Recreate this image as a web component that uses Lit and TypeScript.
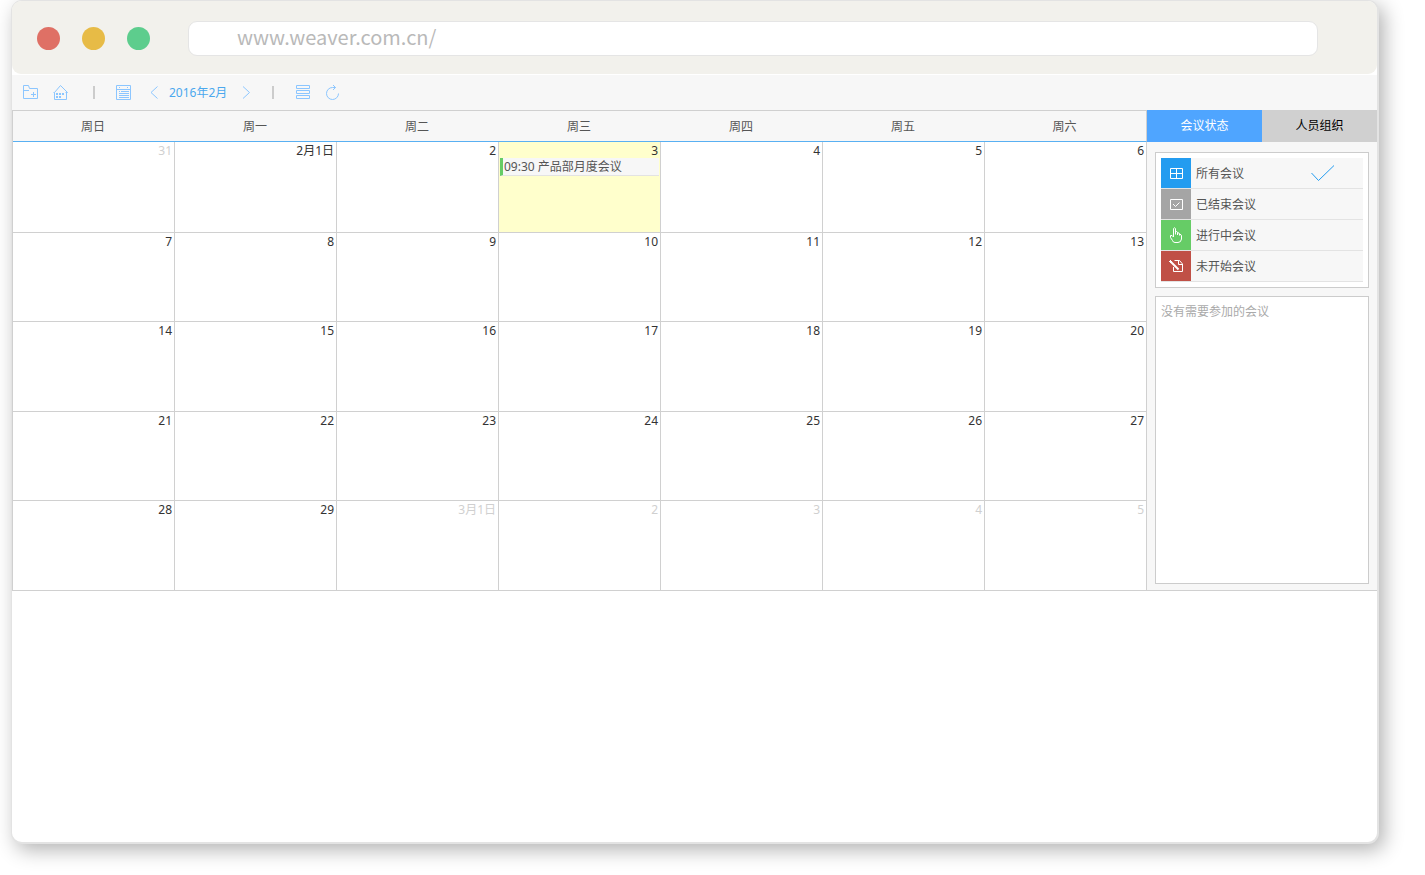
import { LitElement, html, css, svg } from "lit";
import { customElement, state } from "lit/decorators.js";
import { classMap } from "lit/directives/class-map.js";

interface Day {
  label: string;
  other?: boolean;
  today?: boolean;
  event?: string;
}

const WEEKDAYS = ["周日", "周一", "周二", "周三", "周四", "周五", "周六"];

const DAYS: Day[] = [
  { label: "31", other: true },
  { label: "2月1日" },
  { label: "2" },
  { label: "3", today: true, event: "09:30 产品部月度会议" },
  ...Array.from({ length: 26 }, (_, i) => ({ label: String(i + 4) })),
  { label: "3月1日", other: true },
  ...["2", "3", "4", "5"].map((label) => ({ label, other: true })),
];

const WEEKS = Array.from({ length: 5 }, (_, i) => DAYS.slice(i * 7, i * 7 + 7));

const icon = (w: number, h: number, body: unknown) =>
  html`<svg width=${w} height=${h} viewBox="0 0 ${w} ${h}" fill="none" stroke="currentColor" aria-hidden="true">${body}</svg>`;

const ICONS = {
  folder: icon(16, 15, svg`<path d="M.5 13.5V.5H5.5L6.5 3.5H14.5V13.5ZM.5 5.5H6M8 9.5H13M10.5 7V12" />`),
  home: icon(16, 15, svg`<path d="M1.5 7.5L7.5 .5L14.5 7.5H12.5M.5 7.500H1.500V14.500H13.500V7.500" /><path d="M3 9H5M6 9H8M9 9H11M3 12H5M6 12H8" stroke-width="2" />`),
  month: icon(16, 15, svg`<path d="M.5 .5H14.5V14.5H.5ZM.5 4.5H14.5M3 6.5H4M5 6.5H13M3 8.5H13M3 10.5H13M3 12.5H13M3.5 2V3M11.5 2V3" />`),
  prev: icon(8, 13, svg`<path d="M7.5 .5L1 6.5L7.5 12.5" />`),
  next: icon(8, 13, svg`<path d="M1 .5L7.5 6.5L1 12.5" />`),
  list: icon(16, 15, svg`<path d="M1.5 .5H14.5V3.5H1.5ZM1.5 5.5H14.5V8.5H1.5ZM1.5 10.5H14.5V13.5H1.5Z" />`),
  refresh: icon(16, 15, svg`<path d="M10.5 2.5H7.5A6 6 0 1 0 13.500 8.500M8 0L10.5 2.5L8 5" />`),
  all: icon(14, 12, svg`<path d="M1.500 1.500H13.500V11.500H1.500ZM7.500 1.500V11.500M1.500 6.500H13.500" />`),
  ended: icon(14, 12, svg`<path d="M1.500 1.500H13.500V11.500H1.500Z" /><path d="M4 6L6.500 8.500L10.500 4.500" />`),
  hand: icon(12, 16, svg`<path d="M3.500 10V1.500Q4.500 0 5.500 1.500V7.500M5.500 4.500Q7 4 7.500 5.500V8M7.500 5.500Q9 5.500 9.500 7V8.500M9.500 7Q11.500 7.500 11.500 9V12Q11 15.500 8 15.500H5Q3 15.500 2.500 13.500L.5 10.500V8.500H2L3.500 10" />`),
  pending: icon(14, 12, svg`<path d="M4.500 7V11.500H13.500V4L10.500 .5H5.500M9.500 .5V4.500H13.500" /><path d="M2 2L9.500 9.500" stroke-width="2" /><path d="M0 1.500H3M1.500 0V3" />`),
  tick: icon(24, 16, svg`<path d="M.5 8L7.500 15.500L23 .5" />`),
};

const STATUSES = [
  { name: "所有会议", kind: "all", icon: ICONS.all },
  { name: "已结束会议", kind: "ended", icon: ICONS.ended },
  { name: "进行中会议", kind: "running", icon: ICONS.hand },
  { name: "未开始会议", kind: "pending", icon: ICONS.pending },
];

@customElement("browser-bar")
export class BrowserBar extends LitElement {
  static styles = css`
    :host {
      display: flex;
      align-items: center;
      gap: 38px;
      height: 73px;
      padding: 2px 59px 0 25px;
      box-sizing: border-box;
      background: #f2f1ec;
      border-radius: 9px;
    }
    .dots {
      display: flex;
      gap: 22px;
    }
    .dot {
      width: 23px;
      height: 23px;
      border-radius: 50%;
    }
    .close { background: #df7065; }
    .minimise { background: #e7bb46; }
    .expand { background: #5dcd8d; }
    .address {
      flex: 1;
      min-width: 0;
      height: 35px;
      box-sizing: border-box;
      padding: 0 48px 4px;
      border: 1px solid #e5e5e5;
      border-radius: 9px;
      background: #fff;
      color: #b9b9b9;
      font: 20px/29px "Noto Sans CJK SC", sans-serif;
    }
  `;

  render() {
    return html`
      <div class="dots">
        <span class="dot close"></span>
        <span class="dot minimise"></span>
        <span class="dot expand"></span>
      </div>
      <input class="address" type="text" aria-label="地址" value="www.weaver.com.cn/" />
    `;
  }
}

@customElement("meeting-toolbar")
export class MeetingToolbar extends LitElement {
  static styles = css`
    :host {
      display: flex;
      align-items: center;
      height: 35px;
      padding: 0 11px;
      background: #f7f7f7;
      color: #8cc6ff;
    }
    .group {
      display: flex;
      align-items: center;
      gap: 14px;
    }
    .create { padding-right: 2px; }
    .period { gap: 11px; }
    .month-group { gap: 18px; }
    button {
      display: flex;
      padding: 0;
      border: 0;
      background: none;
      color: inherit;
      font: 12px/17px "Noto Sans", "Noto Sans CJK SC", sans-serif;
      cursor: pointer;
    }
    .month {
      padding-right: 4px;
      color: #4ba8ee;
    }
    .divider {
      width: 2px;
      height: 13px;
      margin: 0 21px 0 22px;
      background: #ccc;
    }
  `;

  render() {
    return html`
      <div class="group create">
        <button aria-label="新建会议">${ICONS.folder}</button>
        <button aria-label="首页">${ICONS.home}</button>
      </div>
      <span class="divider"></span>
      <div class="group month-group">
        <button aria-label="月视图">${ICONS.month}</button>
        <div class="group period">
          <button aria-label="上个月">${ICONS.prev}</button>
          <button class="month">2016年2月</button>
          <button aria-label="下个月">${ICONS.next}</button>
        </div>
      </div>
      <span class="divider"></span>
      <div class="group">
        <button aria-label="列表">${ICONS.list}</button>
        <button aria-label="刷新">${ICONS.refresh}</button>
      </div>
    `;
  }
}

@customElement("month-calendar")
export class MonthCalendar extends LitElement {
  static styles = css`
    :host {
      display: block;
      border-top: 1px solid #d0d0d0;
    }
    table {
      width: 100%;
      table-layout: fixed;
      border-collapse: separate;
      border-spacing: 0;
      border-left: 1px solid #d0d0d0;
      box-sizing: border-box;
    }
    th {
      height: 28px;
      padding: 2px 2px 0 0;
      border-bottom: 1px solid #59b0f2;
      background: #f7f7f7;
      color: #555;
      font-weight: 400;
    }
    th:last-child { border-right: 1px solid #d0d0d0; }
    td {
      height: 89px;
      padding: 0;
      border-right: 1px solid #d0d0d0;
      border-bottom: 1px solid #d0d0d0;
      vertical-align: top;
      color: #333;
    }
    tr:nth-child(even) td { height: 88px; }
    tbody tr:first-child td { height: 90px; }
    .date {
      padding: 2px 2px 0 0;
      text-align: right;
      line-height: 14px;
    }
    .other { color: #d0d0d0; }
    .today { background: #ffffcc; }
    .event {
      display: block;
      margin: 0 1px;
      padding-left: 1px;
      border-left: 3px solid #66cc66;
      border-bottom: 1px solid #e3e3e3;
      background: #f7f7f7;
      color: #555;
      line-height: 17px;
      text-decoration: none;
      white-space: nowrap;
      overflow: hidden;
    }
  `;

  render() {
    return html`
      <table>
        <thead>
          <tr>${WEEKDAYS.map((d) => html`<th scope="col">${d}</th>`)}</tr>
        </thead>
        <tbody>
          ${WEEKS.map(
            (week) => html`<tr>
              ${week.map(
                (day) => html`<td class=${classMap({ other: !!day.other, today: !!day.today })}>
                  <div class="date">${day.label}</div>
                  ${day.event ? html`<a class="event" href="#">${day.event}</a>` : ""}
                </td>`
              )}
            </tr>`
          )}
        </tbody>
      </table>
    `;
  }
}

@customElement("meeting-sidebar")
export class MeetingSidebar extends LitElement {
  @state() private selected = 0;

  static styles = css`
    :host {
      display: flex;
      flex-direction: column;
      box-sizing: border-box;
      border-bottom: 1px solid #d0d0d0;
      background: #f7f7f7;
    }
    button {
      padding: 0;
      border: 0;
      font: inherit;
      cursor: pointer;
    }
    .tabs {
      display: flex;
    }
    .tab {
      flex: 1;
      height: 32px;
      background: #d0d0d0;
      color: #000;
    }
    .tab.active {
      background: #4fa5ff;
      color: #fff;
    }
    .panels {
      flex: 1;
      display: flex;
      flex-direction: column;
      gap: 8px;
      padding: 10px 8px 6px;
    }
    .panel {
      padding: 5px;
      border: 1px solid #ccc;
      background: #fff;
    }
    .meetings {
      flex: 1;
      color: #aaa;
      line-height: 20px;
    }
    .status {
      display: flex;
      align-items: center;
      gap: 5px;
      width: 100%;
      border-bottom: 1px solid #e3e3e3;
      background: #f7f7f7;
      color: #555;
      text-align: left;
    }
    .name { padding-top: 2px; }
    .badge {
      display: flex;
      align-items: center;
      justify-content: center;
      width: 30px;
      height: 30px;
      color: #fff;
    }
    .all { background: #239cf0; }
    .ended { background: #a5a5a5; }
    .running { background: #66cc66; }
    .pending { background: #c05046; }
    .tick {
      display: flex;
      margin: 0 28px 0 auto;
      color: #239cf0;
    }
  `;

  render() {
    return html`
      <div class="tabs" role="tablist">
        <button class="tab active" role="tab" aria-selected="true">会议状态</button>
        <button class="tab" role="tab" aria-selected="false">人员组织</button>
      </div>
      <div class="panels">
        <div class="panel">
          ${STATUSES.map(
            (s, i) => html`<button class="status" @click=${() => (this.selected = i)}>
              <span class="badge ${s.kind}">${s.icon}</span>
              <span class="name">${s.name}</span>
              ${i === this.selected ? html`<span class="tick">${ICONS.tick}</span>` : ""}
            </button>`
          )}
        </div>
        <div class="panel meetings">没有需要参加的会议</div>
      </div>
    `;
  }
}

@customElement("app-root")
export class AppRoot extends LitElement {
  static styles = css`
    :host {
      display: block;
      min-height: 100vh;
      box-sizing: border-box;
      padding: 0 46px 31px 11px;
      background: #fff;
      font: 12px/18px "Noto Sans", "Noto Sans CJK SC", sans-serif;
      overflow: hidden;
    }
    .window {
      min-height: calc(100vh - 31px);
      box-sizing: border-box;
      border: 1px solid #e3e3e3;
      border-right-width: 2px;
      border-bottom-width: 2px;
      border-radius: 11px;
      background: #fff;
      box-shadow: 5px 6px 20px rgba(0, 0, 0, 0.3);
    }
    .app { padding-top: 1px; }
    .content { display: flex; }
    .calendar {
      flex: 1;
      min-width: 0;
    }
    .sidebar { width: 230px; }
  `;

  render() {
    return html`
      <div class="window">
        <browser-bar></browser-bar>
        <main class="app">
          <meeting-toolbar></meeting-toolbar>
          <div class="content">
            <month-calendar class="calendar"></month-calendar>
            <meeting-sidebar class="sidebar"></meeting-sidebar>
          </div>
        </main>
      </div>
    `;
  }
}
